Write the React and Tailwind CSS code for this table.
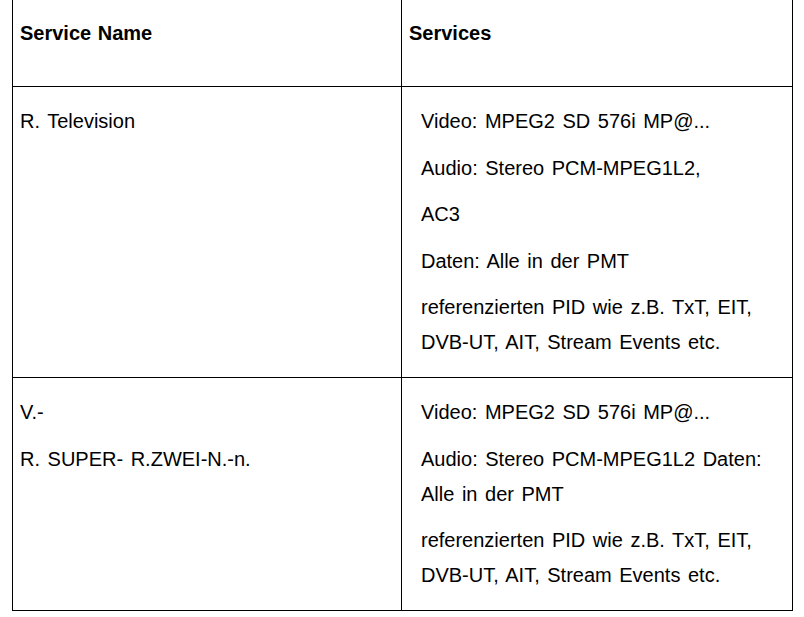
const rows = [
  {
    name: [['R. Television']],
    services: [
      ['Video: MPEG2 SD 576i MP@...'],
      ['Audio: Stereo PCM-MPEG1L2,'],
      ['AC3'],
      ['Daten: Alle in der PMT'],
      ['referenzierten PID wie z.B. TxT, EIT,', 'DVB-UT, AIT, Stream Events etc.'],
    ],
    h: 'h-[291px]',
  },
  {
    name: [['V.-'], ['R. SUPER- R.ZWEI-N.-n.']],
    services: [
      ['Video: MPEG2 SD 576i MP@...'],
      ['Audio: Stereo PCM-MPEG1L2 Daten:', 'Alle in der PMT'],
      ['referenzierten PID wie z.B. TxT, EIT,', 'DVB-UT, AIT, Stream Events etc.'],
    ],
    h: 'h-[232px]',
  },
];

function Paras({ items }) {
  return (
    <div className="flex flex-col gap-[11.5px]">
      {items.map((p, i) => (
        <div key={i}>
          {p.map((line) => (
            <div key={line} className="whitespace-nowrap">{line}</div>
          ))}
        </div>
      ))}
    </div>
  );
}

export default function App() {
  return (
    <div className="min-h-screen bg-white pl-[12px] font-['Liberation_Sans',Arial,sans-serif] text-[20px] leading-[35px] text-black [word-spacing:2px]">
      <div className="w-[781px] border-x border-b border-black">
        <div className="flex h-[87px] border-b border-black font-bold [word-spacing:1px]">
          <div className="w-[389px] border-r border-black pl-[7px] pt-[16px]">Service Name</div>
          <div className="flex-1 pl-[7px] pt-[16px]">Services</div>
        </div>
        {rows.map((r, i) => (
          <div key={i} className={`flex ${r.h} ${i < rows.length - 1 ? 'border-b border-black' : ''}`}>
            <div className="w-[389px] border-r border-black pl-[7px] pt-[17px]">
              <Paras items={r.name} />
            </div>
            <div className="flex-1 pl-[19px] pt-[17px]">
              <Paras items={r.services} />
            </div>
          </div>
        ))}
      </div>
    </div>
  );
}
